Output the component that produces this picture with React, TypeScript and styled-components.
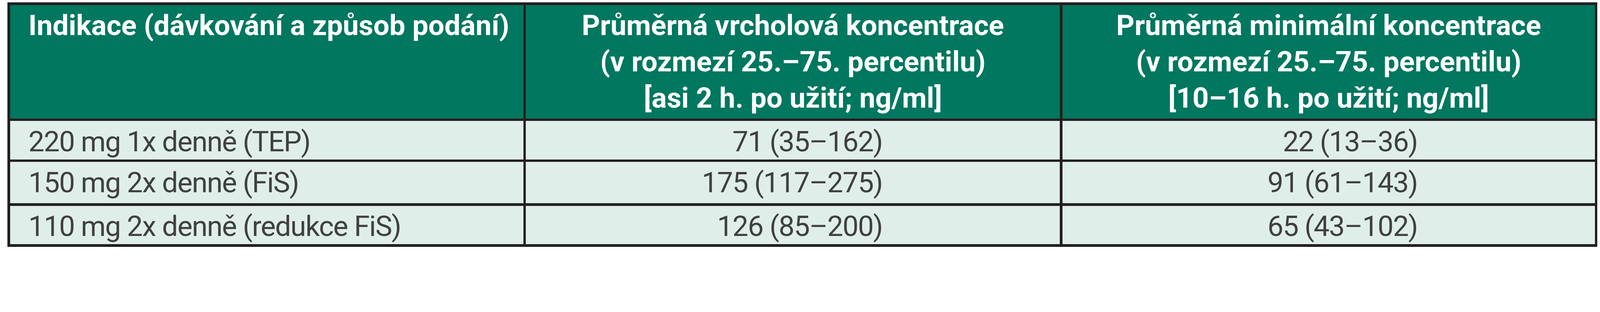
import { Fragment } from "react";
import styled, { createGlobalStyle } from "styled-components";

// sizes are given in pixels of the 5069px-wide reference and scaled to the viewport
const r = (n: number) => `calc(${n} * 100vw / 5069)`;

const GlobalStyle = createGlobalStyle`
  body {
    margin: 0;
    background: #fff;
    font-family: Roboto, "Liberation Sans", sans-serif;
  }
`;

const Table = styled.div`
  display: grid;
  grid-template-columns: ${r(1626)} ${r(1692)} ${r(1687)};
  grid-template-rows: ${r(360)} ${r(122)} ${r(131)} ${r(122)};
  gap: ${r(8)};
  padding: ${r(8)};
  margin: ${r(8)} 0 0 ${r(24)};
  width: max-content;
  background: #231f20;
`;

const HeadCell = styled.div<{ $align?: "left" | "center" }>`
  background: #00775f;
  color: #fff;
  font-weight: 700;
  font-size: ${r(90)};
  line-height: ${r(115)};
  padding: ${r(9)} ${r(58)} 0;
  text-align: ${(p) => p.$align ?? "center"};
  white-space: nowrap;
`;

const BodyCell = styled.div<{ $align?: "left" | "right" }>`
  background: #dfeee9;
  color: #404040;
  font-weight: 400;
  font-size: ${r(90)};
  line-height: ${r(115)};
  letter-spacing: ${r(-2)};
  padding: ${(p) => (p.$align === "right" ? `${r(9)} ${r(562)} 0 0` : `${r(9)} 0 0 ${r(58)}`)};
  text-align: ${(p) => p.$align ?? "left"};
  white-space: nowrap;
`;

const rows = [
  ["220 mg 1x denně (TEP)", "71 (35–162)", "22 (13–36)"],
  ["150 mg 2x denně (FiS)", "175 (117–275)", "91 (61–143)"],
  ["110 mg 2x denně (redukce FiS)", "126 (85–200)", "65 (43–102)"],
];

export default function App() {
  return (
    <>
      <GlobalStyle />
      <Table>
        <HeadCell $align="left">Indikace (dávkování a způsob podání)</HeadCell>
        <HeadCell>
          Průměrná vrcholová koncentrace
          <br />
          (v rozmezí 25.–75. percentilu)
          <br />
          [asi 2 h. po užití; ng/ml]
        </HeadCell>
        <HeadCell>
          Průměrná minimální koncentrace
          <br />
          (v rozmezí 25.–75. percentilu)
          <br />
          [10–16 h. po užití; ng/ml]
        </HeadCell>
        {rows.map(([indication, peak, trough]) => (
          <Fragment key={indication}>
            <BodyCell>{indication}</BodyCell>
            <BodyCell $align="right">{peak}</BodyCell>
            <BodyCell $align="right">{trough}</BodyCell>
          </Fragment>
        ))}
      </Table>
    </>
  );
}
